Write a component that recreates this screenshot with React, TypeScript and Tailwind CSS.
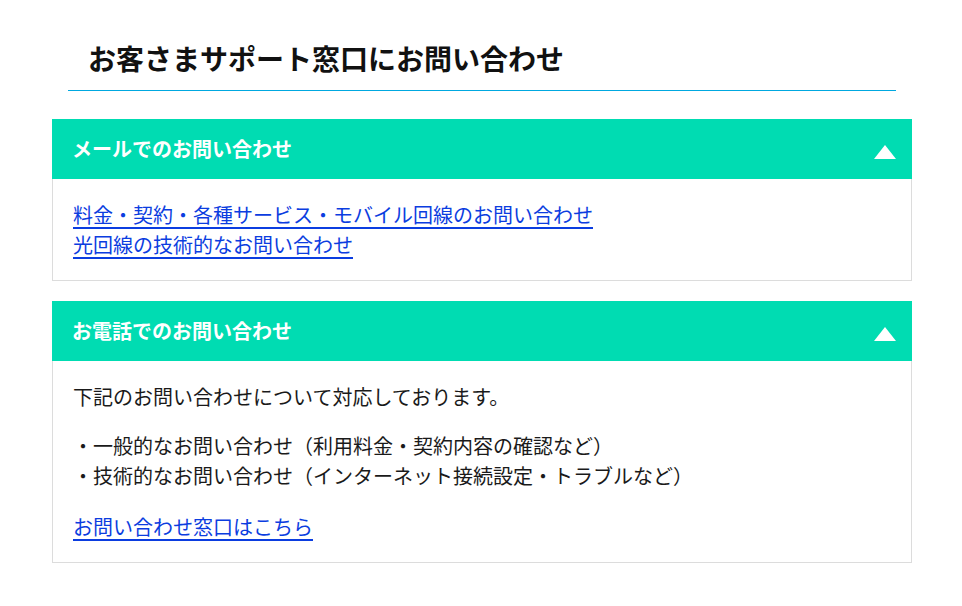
import React from "react";

const font = { fontFamily: '"Noto Sans CJK JP", "Noto Sans", sans-serif' };

function Triangle() {
  return (
    <svg width="22" height="14" viewBox="0 0 22 14" className="block mt-[6px]">
      <polygon points="11,0 22,14 0,14" fill="#ffffff" />
    </svg>
  );
}

function Section({ title, children }: { title: string; children: React.ReactNode }) {
  return (
    <section className="w-[860px]">
      <div className="h-[60px] bg-[#00dcb2] flex items-center justify-between pl-[20px] pr-[16px]">
        <h2 className="text-[20px] leading-[30px] font-bold text-white">{title}</h2>
        <Triangle />
      </div>
      <div className="border border-t-0 border-[#dcdcdc] pl-[20px] pr-[20px] pt-[21px] pb-[20px] text-[20px] leading-[30px] text-[#1a1a1a]">
        {children}
      </div>
    </section>
  );
}

export default function App() {
  return (
    <div className="w-[962px] h-[606px] bg-white" style={font}>
      <div className="pl-[52px] pt-[37px]">
        <div className="w-[828px] ml-[16px] border-b border-[#00a8e0] pb-[11px]">
          <h1 className="pl-[20px] text-[28px] leading-[42px] font-bold text-[#111]">
            お客さまサポート窓口にお問い合わせ
          </h1>
        </div>
        <div className="mt-[28px] flex flex-col gap-[20px]">
          <Section title="メールでのお問い合わせ">
            <a href="#" className="block text-[#0b3de0] underline underline-offset-[4px]">
              料金・契約・各種サービス・モバイル回線のお問い合わせ
            </a>
            <a href="#" className="block text-[#0b3de0] underline underline-offset-[4px]">
              光回線の技術的なお問い合わせ
            </a>
          </Section>
          <Section title="お電話でのお問い合わせ">
            <p>下記のお問い合わせについて対応しております。</p>
            <p className="mt-[19px]">
              ・一般的なお問い合わせ（利用料金・契約内容の確認など）
              <br />
              ・技術的なお問い合わせ（インターネット接続設定・トラブルなど）
            </p>
            <p className="mt-[21px]">
              <a href="#" className="text-[#0b3de0] underline underline-offset-[4px]">
                お問い合わせ窓口はこちら
              </a>
            </p>
          </Section>
        </div>
      </div>
    </div>
  );
}
